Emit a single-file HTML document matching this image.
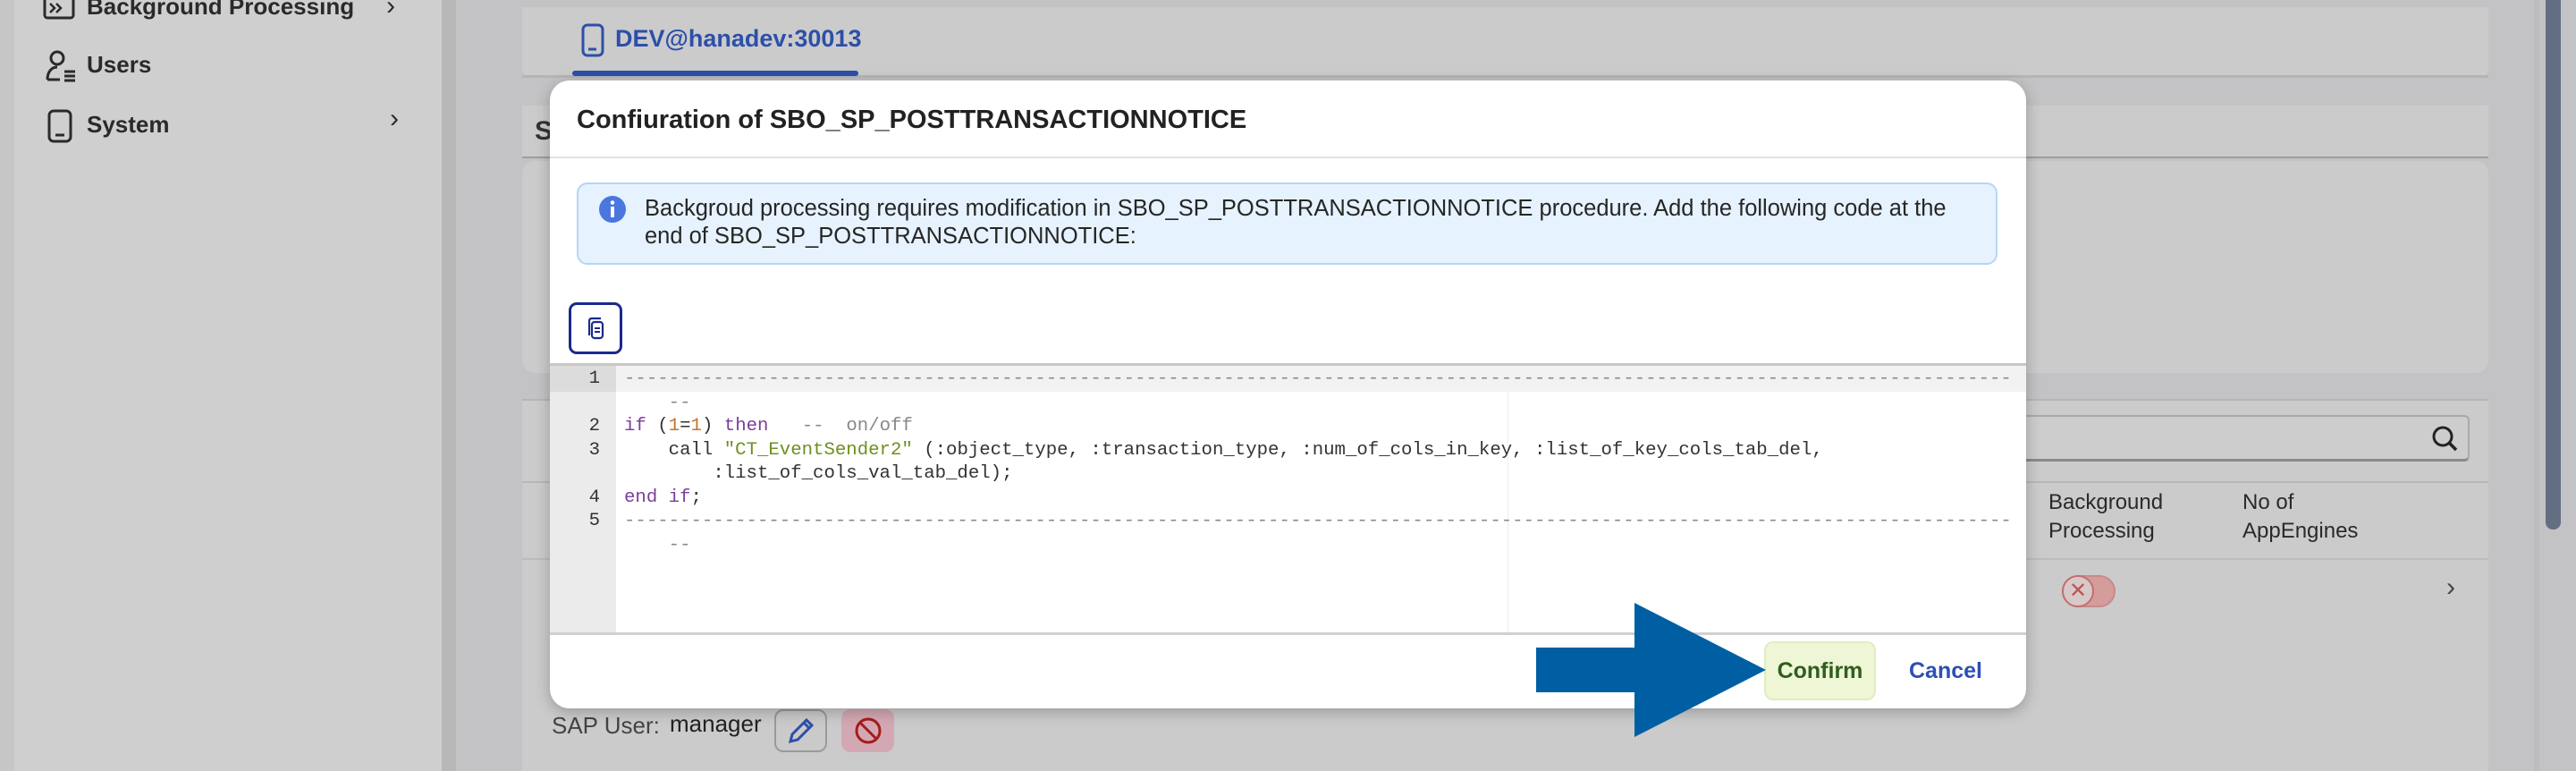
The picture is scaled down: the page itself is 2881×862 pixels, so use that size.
<!DOCTYPE html>
<html><head><meta charset="utf-8"><style>
*{box-sizing:border-box;margin:0;padding:0}
body{width:2881px;height:862px;overflow:hidden;background:#c3c3c5;font-family:"Liberation Sans",sans-serif;position:relative}
.abs{position:absolute}
.side{left:0;top:0;width:494px;height:862px;background:#cfcfcf;border-left:16px solid #c6c6c6}
.strip{left:494px;top:0;width:16px;height:862px;background:#b8b8b9}
.nav{font-size:26px;font-weight:bold;color:#2a2a2a;left:97px}
.panel{background:#cbcbcb;border-radius:14px}
.dlg{left:615px;top:90px;width:1651px;height:702px;background:#fff;border-radius:22px;overflow:hidden;box-shadow:0 4px 16px rgba(0,0,0,.25)}
.code{font-family:"Liberation Mono",monospace;font-size:20.7px;white-space:pre;color:#333;line-height:26.5px}
.kw{color:#7a3e9d}.num{color:#c0762a}.str{color:#6f8f1e}.cm{color:#888}
</style></head><body>
<div class="abs side"></div>
<div class="abs strip"></div>
<svg class="abs" style="left:48px;top:0" width="40" height="24" viewBox="0 0 40 24"><rect x="2" y="-10" width="32" height="30" rx="3" fill="none" stroke="#2a2a2a" stroke-width="3"/><path d="M8 4l5 5-5 5M15 4l5 5-5 5" stroke="#2a2a2a" stroke-width="2.5" fill="none"/></svg>
<div class="abs nav" style="top:-8px">Background Processing</div>
<div class="abs nav" style="left:432px;top:-10px;font-weight:normal;font-size:30px">›</div>
<svg class="abs" style="left:50px;top:56px" width="40" height="36" viewBox="0 0 40 36"><circle cx="14" cy="9" r="7" fill="none" stroke="#2a2a2a" stroke-width="3"/><path d="M3 33c0-9 5-14 11-14" fill="none" stroke="#2a2a2a" stroke-width="3"/><path d="M3 33h14M22 24h12M22 29h12M22 34h12" stroke="#2a2a2a" stroke-width="3"/></svg>
<div class="abs nav" style="top:57px">Users</div>
<svg class="abs" style="left:53px;top:122px" width="30" height="38" viewBox="0 0 30 38"><rect x="2" y="2" width="24" height="34" rx="5" fill="none" stroke="#2a2a2a" stroke-width="3"/><path d="M9 29h10" stroke="#2a2a2a" stroke-width="3"/></svg>
<div class="abs nav" style="top:124px">System</div>
<div class="abs nav" style="left:436px;top:116px;font-weight:normal;font-size:30px">›</div>

<div class="abs panel" style="left:584px;top:8px;width:2199px;height:77px;border-radius:0 0 8px 8px"></div>
<div class="abs" style="left:584px;top:84px;width:2199px;height:3px;background:#b5b5b7"></div>
<svg class="abs" style="left:650px;top:26px" width="26" height="38" viewBox="0 0 26 38"><rect x="2" y="2" width="22" height="34" rx="5" fill="none" stroke="#2d4fa8" stroke-width="3"/><path d="M8 29h9" stroke="#2d4fa8" stroke-width="3"/></svg>
<div class="abs" style="left:688px;top:28px;font-size:27px;font-weight:bold;color:#2d4fa8">DEV@hanadev:30013</div>
<div class="abs" style="left:640px;top:79px;width:320px;height:6px;background:#2d4fa8;border-radius:3px"></div>
<div class="abs panel" style="left:584px;top:118px;width:2199px;height:57px;border-radius:0"></div>
<div class="abs" style="left:584px;top:175px;width:2199px;height:2px;background:#9d9d9f"></div>
<div class="abs" style="left:598px;top:130px;font-size:30px;font-weight:bold;color:#333">S</div>
<div class="abs panel" style="left:584px;top:180px;width:2199px;height:237px"></div>
<div class="abs" style="left:584px;top:446px;width:2199px;height:2px;background:#b5b5b7"></div>
<div class="abs panel" style="left:584px;top:448px;width:2199px;height:414px;border-radius:0"></div>
<div class="abs" style="left:2200px;top:464px;width:562px;height:52px;border:2px solid #a9a9ab;border-bottom:3px solid #8a8a8c;border-radius:6px;background:#cdcdcd"></div>
<svg class="abs" style="left:2718px;top:474px" width="34" height="34" viewBox="0 0 34 34"><circle cx="14" cy="14" r="10" fill="none" stroke="#222" stroke-width="3"/><path d="M21 21l8 8" stroke="#222" stroke-width="3.5"/></svg>
<div class="abs" style="left:584px;top:538px;width:2199px;height:2px;background:#b8b8ba"></div>
<div class="abs" style="left:2291px;top:546px;font-size:24px;color:#2a2a2a;line-height:32px">Background<br>Processing</div>
<div class="abs" style="left:2508px;top:546px;font-size:24px;color:#2a2a2a;line-height:32px">No of<br>AppEngines</div>
<div class="abs" style="left:584px;top:624px;width:2199px;height:2px;background:#bcbcbe"></div>
<div class="abs" style="left:2306px;top:643px;width:60px;height:36px;border-radius:18px;background:#d59c9c;border:2px solid #c98a8a"></div>
<div class="abs" style="left:2306px;top:643px;width:36px;height:36px;border-radius:18px;background:#d7c9c9;border:2px solid #c26e6e;color:#b55;font-size:24px;text-align:center;line-height:31px">✕</div>
<div class="abs" style="left:2736px;top:640px;font-size:30px;color:#444">›</div>
<div class="abs" style="left:2847px;top:0;width:17px;height:592px;background:#646e83;border-radius:0 0 8px 8px"></div>
<div class="abs" style="left:2834px;top:0;width:6px;height:862px;background:#bdbdbf"></div>

<div class="abs" style="left:617px;top:796px;font-size:26px;color:#444">SAP User:</div>
<div class="abs" style="left:749px;top:794px;font-size:26px;color:#222">manager</div>
<div class="abs" style="left:866px;top:793px;width:59px;height:48px;border:2px solid #9a9a9a;border-radius:10px;background:#cacaca"></div>
<svg class="abs" style="left:880px;top:801px" width="32" height="32" viewBox="0 0 32 32"><path d="M22 4l6 6L12 26l-8 2 2-8z M19 7l6 6" fill="none" stroke="#2d4fa8" stroke-width="3"/></svg>
<div class="abs" style="left:941px;top:793px;width:59px;height:48px;border-radius:10px;background:#d4a8b3"></div>
<svg class="abs" style="left:954px;top:800px" width="34" height="34" viewBox="0 0 34 34"><circle cx="17" cy="17" r="13" fill="none" stroke="#a41c1c" stroke-width="3"/><path d="M8 8l18 18" stroke="#a41c1c" stroke-width="3"/></svg>

<div class="abs dlg">
  <div class="abs" style="left:30px;top:28px;font-size:29px;font-weight:bold;color:#222">Confiuration of SBO_SP_POSTTRANSACTIONNOTICE</div>
  <div class="abs" style="left:0;top:85px;width:1651px;height:2px;background:#e2e2e2"></div>
  <div class="abs" style="left:30px;top:114px;width:1589px;height:92px;background:#e6f2fd;border:2px solid #b5d6f5;border-radius:12px"></div>
  <svg class="abs" style="left:54px;top:128px" width="32" height="32" viewBox="0 0 32 32"><circle cx="16" cy="16" r="15" fill="#4a76e0"/><rect x="14" y="13" width="4" height="12" fill="#fff"/><circle cx="16" cy="8.5" r="2.3" fill="#fff"/></svg>
  <div class="abs" style="left:106px;top:128px;font-size:25.5px;color:#262626;line-height:31px;width:1500px">Backgroud processing requires modification in SBO_SP_POSTTRANSACTIONNOTICE procedure. Add the following code at the<br>end of SBO_SP_POSTTRANSACTIONNOTICE:</div>
  <div class="abs" style="left:21px;top:248px;width:60px;height:58px;border:3px solid #1b2a8c;border-radius:9px"></div>
  <svg class="abs" style="left:35px;top:261px" width="32" height="32" viewBox="0 0 32 32"><path d="M9 24V8c0-2 1-3 3-3h10" fill="none" stroke="#1b2a8c" stroke-width="2.2"/><rect x="12" y="9" width="12" height="18" rx="3" fill="none" stroke="#1b2a8c" stroke-width="2.2"/><path d="M15 16h6M15 20h6" stroke="#1b2a8c" stroke-width="2"/></svg>
  <div class="abs" style="left:0;top:316px;width:1651px;height:3px;background:#c8c8c8"></div>
  <div class="abs" style="left:0;top:319px;width:74px;height:300px;background:#ebebeb"></div>
  <div class="abs" style="left:0;top:319px;width:74px;height:29px;background:#dcdcdc"></div>
  <div class="abs" style="left:74px;top:319px;width:1577px;height:29px;background:#f2f2f2"></div>
  <div class="abs" style="left:1071px;top:348px;width:1px;height:270px;background:#eee"></div>
  <div class="abs code" style="left:0;top:321px;width:56px;text-align:right;color:#333">1

2
3

4
5</div>
  <div class="abs code" style="left:83px;top:321px;width:1552px;overflow:hidden"><span class="cm">------------------------------------------------------------------------------------------------------------------------------------------------
    --</span>
<span class="kw">if</span> (<span class="num">1</span>=<span class="num">1</span>) <span class="kw">then</span>   <span class="cm">--  on/off</span>
    call <span class="str">"CT_EventSender2"</span> (:object_type, :transaction_type, :num_of_cols_in_key, :list_of_key_cols_tab_del,
        :list_of_cols_val_tab_del);
<span class="kw">end if</span>;
<span class="cm">------------------------------------------------------------------------------------------------------------------------------------------------
    --</span></div>
  <div class="abs" style="left:0;top:617px;width:1651px;height:3px;background:#d0d0d0"></div>
  <div class="abs" style="left:1358px;top:627px;width:125px;height:66px;background:#eef6d6;border:2px solid #e0edc0;border-radius:10px;color:#2f5e1e;font-size:25px;text-align:center;line-height:62px;font-weight:bold">Confirm</div>
  <div class="abs" style="left:1520px;top:646px;color:#2d4fb5;font-size:25px;font-weight:bold">Cancel</div>
</div>

<svg class="abs" style="left:1718px;top:674px" width="260" height="150" viewBox="0 0 260 150"><path d="M0 50H110V0L257 75L110 150V100H0Z" fill="#005fa3"/></svg>
</body></html>
